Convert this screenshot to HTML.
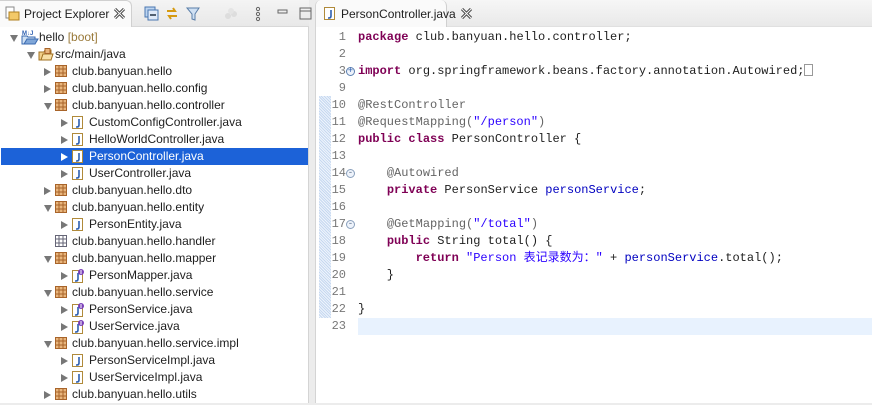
<!DOCTYPE html>
<html><head><meta charset="utf-8">
<style>
*{margin:0;padding:0;box-sizing:border-box}
body{width:872px;height:403px;overflow:hidden;background:#ececec;position:relative;font-family:"Liberation Sans","Noto Sans CJK SC",sans-serif;font-size:12px;color:#1e1e1e}
.abs{position:absolute}
#left{left:0;top:0;width:309px;height:403px;background:#fff;border-right:1px solid #d4d4d4}
#ltabs{left:0;top:0;width:309px;height:27px;background:linear-gradient(#f4f4f4,#e8e8e8);border-bottom:1px solid #d8d8d8}
#ltab{left:0;top:0;width:132px;height:27px;background:#fafafa;border:1px solid #d0d0d0;border-left:none;border-bottom:none;border-radius:0 6px 0 0}
#right{left:315px;top:0;width:557px;height:403px;background:#fff;border-left:1px solid #d4d4d4;border-top-left-radius:6px}
#rtabs{left:0;top:0;width:557px;height:27px;background:linear-gradient(#f6f6f6,#e9e9e9);border-bottom:1px solid #e0e0e0;border-top-left-radius:6px}
#rtab{left:0;top:0;width:131px;height:27px;background:#fafafa;border-right:1px solid #d0d0d0;border-radius:6px 6px 0 0}
.row{position:absolute;height:17px;line-height:17px;white-space:nowrap}
.tri{position:absolute;top:5px;width:0;height:0}
.tr{border-left:7px solid #777;border-top:4px solid transparent;border-bottom:4px solid transparent}
.td{border-top:7px solid #777;border-left:4px solid transparent;border-right:4px solid transparent;top:6px}
.ic{position:absolute;top:2px}
.code{font-family:"Liberation Mono","Noto Sans CJK SC",monospace;font-size:12px;white-space:pre}
.ln{position:absolute;left:0;width:30px;text-align:right;color:#787878;font-family:"Liberation Mono",monospace;font-size:12px;height:17px;line-height:17px}
.cl{position:absolute;left:42px;height:17px;line-height:17px}
.k{color:#7f0055;font-weight:bold}
.s{color:#2a00ff}
.f{color:#0000c0}
.a{color:#646464}
</style></head><body>
<div id="left" class="abs">
 <div id="ltabs" class="abs"></div>
 <div id="ltab" class="abs"></div>
 <svg class="abs" style="left:5px;top:6px" width="16" height="16"><rect x="1" y="1" width="8" height="11" fill="#fff" stroke="#888"/><rect x="4" y="6" width="10" height="8" fill="#f3c969" stroke="#b08020"/></svg>
 <div class="abs" style="left:24px;top:7px;font-size:12px">Project Explorer</div>
 <svg class="abs" style="left:114px;top:8px" width="11" height="11"><path d="M1 1l9 9M10 1l-9 9" stroke="#444" stroke-width="3"/><path d="M1 1l9 9M10 1l-9 9" stroke="#fafafa" stroke-width="1"/></svg>
 <svg class="abs" style="left:143px;top:6px" width="170" height="16">
  <rect x="2" y="1" width="10" height="10" fill="#bcd4f0" stroke="#4a76b0"/><rect x="5" y="4" width="10" height="10" fill="#dfe9f8" stroke="#4a76b0"/><line x1="7" y1="9" x2="13" y2="9" stroke="#234" stroke-width="1.5"/>
  <path d="M24 5h8l-2-3M34 10h-8l2 3" fill="none" stroke="#d69a10" stroke-width="2"/>
  <path d="M44 2h12l-4 6v6l-3-1v-5z" fill="#cfe0f3" stroke="#5a7ea8"/>
  <circle cx="85" cy="10" r="3" fill="#ddd"/><circle cx="91" cy="8" r="3" fill="#ddd"/><circle cx="88" cy="5" r="3" fill="#e4e4e4"/>
  <circle cx="115" cy="3" r="1.6" fill="none" stroke="#666"/><circle cx="115" cy="8" r="1.6" fill="none" stroke="#666"/><circle cx="115" cy="13" r="1.6" fill="none" stroke="#666"/>
  <rect x="135" y="4" width="9" height="3" fill="none" stroke="#666"/>
  <rect x="157" y="2" width="11" height="11" fill="none" stroke="#666"/><line x1="157" y1="5" x2="168" y2="5" stroke="#666"/>
 </svg>
 <div class="abs" style="left:1px;top:148px;width:307px;height:17px;background:#1c62d8"></div>
 <div id="tree"></div>
</div>

<div id="right" class="abs">
 <div id="rtabs" class="abs"></div>
 <div id="rtab" class="abs"></div>
 <svg class="abs" style="left:8px;top:7px" width="12" height="14"><rect x="0.5" y="0.5" width="10" height="12" fill="#fff" stroke="#b08a3a"/><path d="M7 3v6q0 2-2 2h-1" fill="none" stroke="#2d5fb0" stroke-width="1.6"/></svg>
 <div class="abs" style="left:25px;top:7px">PersonController.java</div>
 <svg class="abs" style="left:145px;top:8px" width="11" height="11"><path d="M1 1l9 9M10 1l-9 9" stroke="#444" stroke-width="3"/><path d="M1 1l9 9M10 1l-9 9" stroke="#fafafa" stroke-width="1"/></svg>
 <div class="abs" style="left:3px;top:96px;width:12px;height:222px;background:#dbe7f7;background-image:repeating-linear-gradient(45deg,#c6d8f0 0 1px,#eef4fc 1px 2px)"></div>
 <div class="abs" style="left:42px;top:318px;width:515px;height:17px;background:#e8f2fe"></div>
 <div id="code" class="abs code" style="left:0;top:0;width:557px;height:403px"></div>
</div>

<script>
var rows=[[0,'d','p','hello'],[1,'d','s','src/main/java'],[2,'r','k','club.banyuan.hello'],[2,'r','k','club.banyuan.hello.config'],[2,'d','k','club.banyuan.hello.controller'],[3,'r','j','CustomConfigController.java'],[3,'r','j','HelloWorldController.java'],[3,'r','j','PersonController.java'],[3,'r','j','UserController.java'],[2,'r','k','club.banyuan.hello.dto'],[2,'d','k','club.banyuan.hello.entity'],[3,'r','j','PersonEntity.java'],[2,'','e','club.banyuan.hello.handler'],[2,'d','k','club.banyuan.hello.mapper'],[3,'r','i','PersonMapper.java'],[2,'d','k','club.banyuan.hello.service'],[3,'r','i','PersonService.java'],[3,'r','i','UserService.java'],[2,'d','k','club.banyuan.hello.service.impl'],[3,'r','j','PersonServiceImpl.java'],[3,'r','j','UserServiceImpl.java'],[2,'r','k','club.banyuan.hello.utils']];
var icons={
k:'<svg width="12" height="12"><rect x="0.5" y="0.5" width="11" height="11" fill="#e8b57c" stroke="#a8642a"/><path d="M4 0v12M8 0v12M0 4h12M0 8h12" stroke="#a8642a"/></svg>',
e:'<svg width="12" height="12"><rect x="0.5" y="0.5" width="11" height="11" fill="#fff" stroke="#667"/><path d="M4 0v12M8 0v12M0 4h12M0 8h12" stroke="#667"/></svg>',
j:'<svg width="12" height="14"><rect x="0.5" y="0.5" width="10" height="12" fill="#fff" stroke="#b08a3a"/><path d="M7 3v6q0 2-2 2h-1" fill="none" stroke="#2d5fb0" stroke-width="1.6"/></svg>',
i:'<svg width="13" height="14"><rect x="0.5" y="1.5" width="10" height="12" fill="#fff" stroke="#b08a3a"/><path d="M6 4v6q0 2-2 2h-1" fill="none" stroke="#2d5fb0" stroke-width="1.6"/><circle cx="9" cy="3" r="3" fill="#7a3fb8"/><path d="M9 1v4" stroke="#fff"/></svg>',
s:'<svg width="16" height="13"><path d="M1 4h5l1-2h6v10H1z" fill="#f3d08a" stroke="#a07020"/><path d="M3 12l2-6h10l-2 6z" fill="#f8dfa6" stroke="#a07020"/><rect x="7" y="0.5" width="5" height="5" fill="#e8b57c" stroke="#a8642a"/></svg>',
p:'<svg width="18" height="16"><text x="1" y="6" font-size="6" font-family="Liberation Sans" fill="#2d5fb0" font-weight="bold">M↓J</text><path d="M1 7h5l1 1h7v7H1z" fill="#cfe0f3" stroke="#3a6ab0"/><path d="M3 15l3-5h11l-3 5z" fill="#7fa6d8" stroke="#3a6ab0"/></svg>'};
var h='';
rows.forEach(function(r,i){var L=r[0],x=10+17*L,top=29+17*i,sel=i==7;
h+='<div class="row" style="top:'+top+'px;left:0;width:308px">';
if(r[1])h+='<div class="tri '+(r[1]=='d'?'td':'tr')+'" style="left:'+x+'px;'+(sel?'border-left-color:#fff':'')+'"></div>';
h+='<div class="ic" style="left:'+(x+11)+'px;top:'+(r[2]=='p'?0:2)+'px">'+icons[r[2]]+'</div>';
h+='<span style="position:absolute;left:'+(x+(r[2]=='p'?29:28))+'px;'+(sel?'color:#fff':'')+'">'+r[3]+(i==0?' <span style="color:#9a7a3a">[boot]</span>':'')+'</span></div>';});
document.getElementById('tree').innerHTML=h;
var lines=[['1','<span class="k">package</span> club.banyuan.hello.controller;'],['2',''],['3','<span class="k">import</span> org.springframework.beans.factory.annotation.Autowired;<span style="display:inline-block;width:9px;height:12px;border:1px solid #999;vertical-align:-2px"></span>'],['9',''],['10','<span class="a">@RestController</span>'],['11','<span class="a">@RequestMapping(</span><span class="s">"/person"</span><span class="a">)</span>'],['12','<span class="k">public</span> <span class="k">class</span> PersonController {'],['13',''],['14','    <span class="a">@Autowired</span>'],['15','    <span class="k">private</span> PersonService <span class="f">personService</span>;'],['16',''],['17','    <span class="a">@GetMapping(</span><span class="s">"/total"</span><span class="a">)</span>'],['18','    <span class="k">public</span> String total() {'],['19','        <span class="k">return</span> <span class="s">"Person 表记录数为："</span> + <span class="f">personService</span>.total();'],['20','    }'],['21',''],['22','}'],['23','']];
var c='';
lines.forEach(function(l,i){var t=29+17*i;c+='<div class="ln" style="top:'+t+'px">'+l[0]+'</div><div class="cl" style="top:'+t+'px">'+l[1]+'</div>';
if(l[0]=='3')c+='<div style="position:absolute;left:30px;top:'+(t+4)+'px;width:9px;height:9px;border:1px solid #5b7fb0;border-radius:50%;font-size:9px;line-height:7px;text-align:center;color:#2d5fb0;background:#eef3fb">+</div>';
if(l[0]=='14'||l[0]=='17')c+='<div style="position:absolute;left:30px;top:'+(t+4)+'px;width:9px;height:9px;border:1px solid #8aa0bc;border-radius:50%;font-size:9px;line-height:7px;text-align:center;color:#5b6f8a;background:#eef3fb">-</div>';});
document.getElementById('code').innerHTML=c;
</script>
</body></html>
